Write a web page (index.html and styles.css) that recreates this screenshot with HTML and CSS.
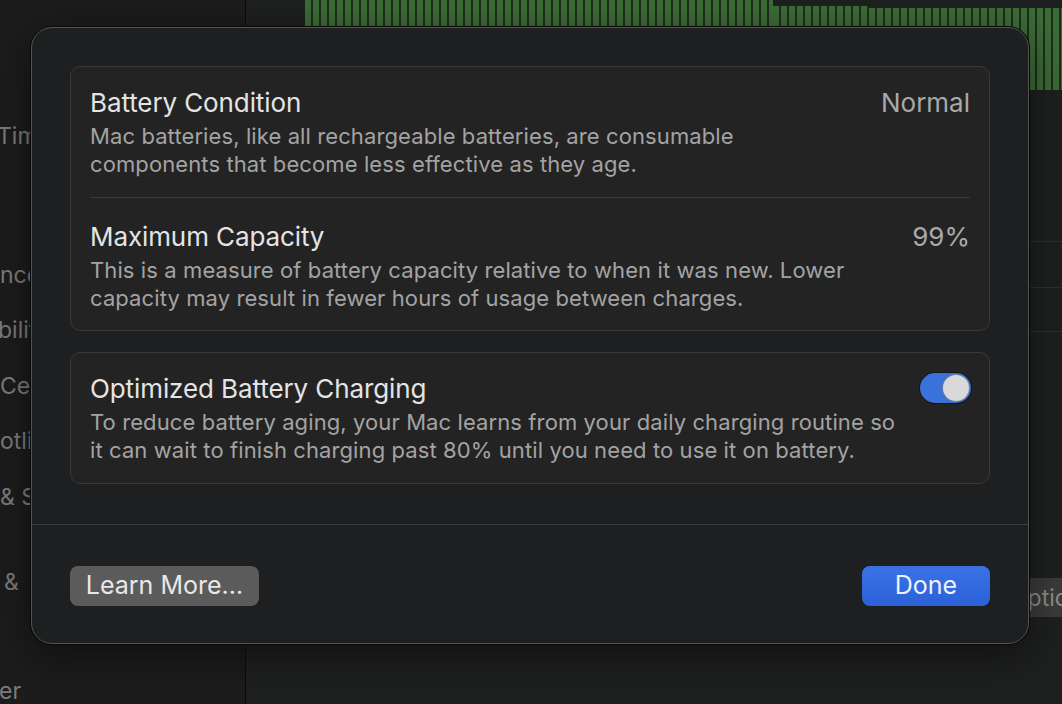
FILE: index.html
```html
<!DOCTYPE html>
<html lang="en">
<head>
<meta charset="utf-8">
<title>Battery Health</title>
<link rel="stylesheet" href="styles.css">
</head>
<body>
<div class="app">
  <aside class="sidebar">
    <div class="side-item t-time">Time</div>
    <div class="side-item sec"></div>
    <div class="side-item">nce</div>
    <div class="side-item t-bil">bility</div>
    <div class="side-item">Center</div>
    <div class="side-item">otlight</div>
    <div class="side-item">&amp; Security</div>
    <div class="side-item sec t-amp">&amp; Dock</div>
    <div class="side-item t-after"></div>
    <div class="side-item t-er">er</div>
  </aside>
  <main class="main">
    <div class="chart">
      <div class="bars bars-a"></div>
      <div class="bars bars-b"></div>
      <div class="bars bars-c"></div>
    </div>
    <div class="list">
      <div class="list-row"></div>
      <div class="list-row"></div>
      <div class="list-row last"></div>
    </div>
    <div class="options-row">
      <button class="options-btn">Options…</button>
    </div>
  </main>
</div>

<div class="sheet">
  <div class="sheet-body">
    <section class="group">
      <div class="row">
        <div class="row-head">
          <span class="row-title">Battery Condition</span>
          <span class="row-value">Normal</span>
        </div>
        <p class="row-desc">Mac batteries, like all rechargeable batteries, are consumable<br>components that become less effective as they age.</p>
      </div>
      <div class="divider"></div>
      <div class="row row-second">
        <div class="row-head">
          <span class="row-title">Maximum Capacity</span>
          <span class="row-value">99%</span>
        </div>
        <p class="row-desc">This is a measure of battery capacity relative to when it was new. Lower<br>capacity may result in fewer hours of usage between charges.</p>
      </div>
    </section>
    <section class="group">
      <div class="row">
        <div class="row-head">
          <span class="row-title">Optimized Battery Charging</span>
          <span class="toggle"><span class="knob"></span></span>
        </div>
        <p class="row-desc">To reduce battery aging, your Mac learns from your daily charging routine so<br>it can wait to finish charging past 80% until you need to use it on battery.</p>
      </div>
    </section>
  </div>
  <div class="sheet-footer">
    <button class="btn btn-gray">Learn More…</button>
    <button class="btn btn-blue">Done</button>
  </div>
</div>
</body>
</html>
```

FILE: styles.css
```css
* { box-sizing: border-box; }

html, body {
  margin: 0;
  padding: 0;
}

body {
  width: 1062px;
  height: 704px;
  overflow: hidden;
  background: #1a1a1a;
  font-family: Inter, "Liberation Sans", sans-serif;
  position: relative;
}

.app {
  display: flex;
  height: 704px;
}

/* sidebar behind the sheet */
.sidebar {
  width: 246px;
  flex: none;
  background: #1c1c1c;
  border-right: 1px solid #0c0c0c;
  padding-top: 109px;
  display: flex;
  flex-direction: column;
  overflow: hidden;
}

.side-item {
  height: 55.5px;
  line-height: 55.5px;
  font-size: 23px;
  color: #7c7c7c;
  white-space: nowrap;
  flex: none;
}

.side-item.sec { margin-top: 27.5px; }
.t-time { margin-left: -3px; }
.t-bil { margin-left: -2px; }
.side-item.t-amp { margin-left: 4px; margin-top: 29.5px; word-spacing: 8px; }
.t-after { margin-top: -2px; }
.t-er { margin-left: -1px; }

/* main content behind the sheet */
.main {
  flex: 1;
  display: flex;
  flex-direction: column;
  background: #1e1f1f;
  padding-left: 59px;
  overflow: hidden;
}

.chart {
  height: 90px;
  display: flex;
  align-items: flex-end;
  flex: none;
}

.bars {
  background: repeating-linear-gradient(90deg, #3c6c36 0 6px, #1f2c1e 6px 8px);
}

.bars-a { width: 468px; height: 90px; }
.bars-b { width: 96px; height: 84px; }
.bars-c { flex: 1; height: 82px; }

.list {
  margin-top: 151px;
  flex: none;
}

.list-row {
  height: 46px;
  border-top: 1px solid #2e2f2f;
}

.list-row + .list-row { height: 44px; }

.options-row {
  display: flex;
  margin-top: 203px;
  padding-left: 691px;
}

.options-btn {
  font-family: inherit;
  font-size: 23px;
  height: 39px;
  padding: 0 14px;
  border: none;
  border-radius: 8px;
  background: #3b3b3b;
  color: #8e8e8e;
  white-space: nowrap;
  flex: none;
}

/* the sheet dialog (overlays the window) */
.sheet {
  position: absolute;
  left: 31px;
  top: 27px;
  width: 998px;
  height: 617px;
  background: #1e1f21;
  border: 1px solid #525354;
  border-radius: 21px;
  box-shadow: 0 0 0 1px #0a0a0a, 0 10px 40px rgba(0, 0, 0, 0.5);
  display: flex;
  flex-direction: column;
}

.sheet-body {
  padding: 38px 38px 40px;
  display: flex;
  flex-direction: column;
  gap: 21px;
  border-bottom: 1px solid #3a3b3c;
}

.group {
  background: #232324;
  border: 1px solid #38393a;
  border-radius: 10px;
  padding: 0 19px;
}

.row {
  padding: 19px 0 19px;
}

.row-second { padding: 22px 0 18px; }

.row-head {
  display: flex;
  justify-content: space-between;
  align-items: center;
  height: 32px;
}

.row-title {
  font-size: 26px;
  color: #e4e4e4;
  letter-spacing: -0.1px;
}

.row-value {
  font-size: 26px;
  color: #a9a9a9;
}

.row-desc {
  margin: 4px 0 0;
  font-size: 22px;
  line-height: 28px;
  letter-spacing: 0.1px;
  color: #a3a3a3;
}

.divider {
  height: 1px;
  background: #3a3b3c;
}

.toggle {
  width: 51px;
  height: 30px;
  border-radius: 15px;
  background: #3a72d9;
  box-shadow: 0 0 0 1px #151515;
  display: flex;
  justify-content: flex-end;
  align-items: center;
  padding: 2px;
  margin-right: -1px;
}

.knob {
  width: 26px;
  height: 26px;
  border-radius: 50%;
  background: #d9d9d9;
  box-shadow: 0 0 0 1px #6a7fa8;
}

.sheet-footer {
  flex: 1;
  display: flex;
  justify-content: space-between;
  align-items: flex-start;
  padding: 41px 38px 0;
}

.btn {
  font-family: inherit;
  font-size: 25px;
  height: 40px;
  border: none;
  border-radius: 8px;
  padding: 0 0 2px;
  cursor: default;
}

.btn-gray {
  width: 189px;
  background: #5b5b5c;
  color: #e8e8e8;
}

.btn-blue {
  width: 128px;
  background: linear-gradient(#3a72e6, #2c61d7);
  color: #eef3ff;
}
```
